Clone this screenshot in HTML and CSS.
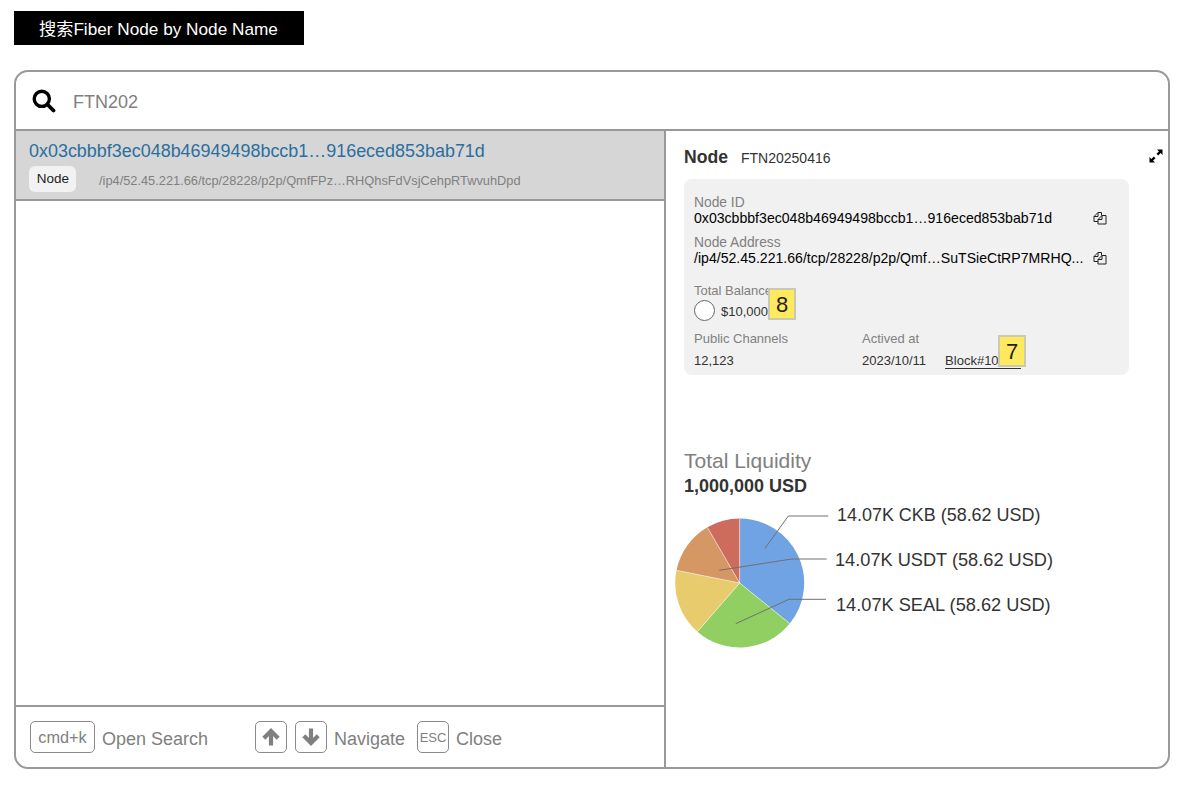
FILE: index.html
```html
<!DOCTYPE html>
<html lang="zh">
<head>
	<meta charset="UTF-8">
	<title>搜索Fiber Node</title>
	<link rel="stylesheet" href="styles.css">
</head>
<body>
	<div class="title">搜索Fiber Node by Node Name</div>
	<div class="panel">
		<div class="search">
			<svg class="search-icon" width="24" height="24" viewBox="0 0 24 24"><circle cx="9.800" cy="9.800" r="7.600" fill="none" stroke="#000" stroke-width="3.400"/><path d="M15.500 15.500L21.500 21.500" stroke="#000" stroke-width="3.800" stroke-linecap="round"/></svg>
			<span class="search-text">FTN202</span>
		</div>
		<div class="body">
			<div class="left">
				<div class="result">
					<div class="result-id">0x03cbbbf3ec048b46949498bccb1…916eced853bab71d</div>
					<div class="result-sub">
						<span class="tag">Node</span>
						<span class="result-addr">/ip4/52.45.221.66/tcp/28228/p2p/QmfFPz…RHQhsFdVsjCehpRTwvuhDpd</span>
					</div>
				</div>
				<div class="list-space"></div>
				<div class="footer">
					<span class="key key-cmd">cmd+k</span>
					<span class="hint hint-open">Open Search</span>
					<span class="key key-sq"><svg width="22" height="22" viewBox="0 0 22 22"><path d="M11 19.500V5.500M3.800 12.200L11 5L18.200 12.200" fill="none" stroke="#808080" stroke-width="4.200"/></svg></span>
					<span class="key key-sq key-down"><svg width="22" height="22" viewBox="0 0 22 22"><path d="M11 2.500V16.500M3.800 9.800L11 17L18.200 9.800" fill="none" stroke="#808080" stroke-width="4.200"/></svg></span>
					<span class="hint hint-nav">Navigate</span>
					<span class="key key-sq key-esc">ESC</span>
					<span class="hint hint-close">Close</span>
				</div>
			</div>
			<div class="right">
				<div class="node-head">
					<b class="node-title">Node</b>
					<span class="node-name">FTN20250416</span>
					<svg class="expand" width="14" height="14" viewBox="0 0 14 14"><path d="M8 0.500H13.500V6L11.600 4.100L9.200 6.500L7.500 4.800L9.900 2.400ZM6 13.500H0.500V8L2.400 9.900L4.800 7.500L6.500 9.200L4.100 11.600Z" fill="#000"/></svg>
				</div>
				<div class="card">
					<div class="label label-wide">Node ID</div>
					<div class="copy-row">
						<span class="value">0x03cbbbf3ec048b46949498bccb1…916eced853bab71d</span>
						<svg class="copy" width="14" height="14" viewBox="0 0 14 14"><path d="M5 10.500H1V5.500L5 1.500H8.500V4.500M1 5.500H5V1.500M5 8.500L9 4.500H13V13H5ZM5 8.500H9V4.500" fill="none" stroke="#222" stroke-width="1"/></svg>
					</div>
					<div class="label label-wide label-addr">Node Address</div>
					<div class="copy-row">
						<span class="value">/ip4/52.45.221.66/tcp/28228/p2p/Qmf…SuTSieCtRP7MRHQ...</span>
						<svg class="copy" width="14" height="14" viewBox="0 0 14 14"><path d="M5 10.500H1V5.500L5 1.500H8.500V4.500M1 5.500H5V1.500M5 8.500L9 4.500H13V13H5ZM5 8.500H9V4.500" fill="none" stroke="#222" stroke-width="1"/></svg>
					</div>
					<div class="balance">
						<div class="label">Total Balance</div>
						<div class="balance-row">
							<span class="coin"></span>
							<span class="value-sm">$10,000,</span>
						</div>
						<span class="badge badge-8">8</span>
					</div>
					<div class="stats">
						<div class="stat-channels">
							<div class="label">Public Channels</div>
							<div class="value-sm stat-value">12,123</div>
						</div>
						<div class="stat-active">
							<div class="label">Actived at</div>
							<div class="value-sm stat-value">2023/10/11<span class="block">Block#10</span></div>
							<span class="badge badge-7">7</span>
						</div>
					</div>
				</div>
				<div class="liquidity">
					<div class="liq-title">Total Liquidity</div>
					<div class="liq-amount">1,000,000 USD</div>
					<svg class="pie" width="390" height="150" viewBox="0 0 390 150">
						<g transform="translate(0.700 0)">
							<path d="M65 79L65 14.500A64.500 64.500 0 0 1 115.100 119.600Z" fill="#6fa3e3"/>
							<path d="M65 79L115.100 119.600A64.500 64.500 0 0 1 22.700 127.700Z" fill="#92cf62"/>
							<path d="M65 79L22.700 127.700A64.500 64.500 0 0 1 1.800 66.300Z" fill="#e7cb6c"/>
							<path d="M65 79L1.800 66.300A64.500 64.500 0 0 1 32.600 23.300Z" fill="#d59864"/>
							<path d="M65 79L32.600 23.300A64.500 64.500 0 0 1 65 14.500Z" fill="#cd6c5c"/>
							<path d="M65 79V14.500M65 79L115.100 119.600M65 79L22.700 127.700M65 79L1.800 66.300M65 79L32.600 23.300" stroke="#fff" stroke-width="0.500" fill="none"/>
						</g>
						<path d="M91 44.300L114.300 12H154.300" class="leader"/>
						<path d="M45.300 66.300L117.700 55H152.700" class="leader"/>
						<path d="M61.700 119.700L115 95.300H152" class="leader"/>
						<text x="163" y="17" class="pie-ckb">14.07K CKB (58.62 USD)</text>
						<text x="161" y="62">14.07K USDT (58.62 USD)</text>
						<text x="162" y="107">14.07K SEAL (58.62 USD)</text>
					</svg>
				</div>
			</div>
		</div>
	</div>
</body>
</html>
```

FILE: styles.css
```css
*{box-sizing:border-box;}
html,body{margin:0;padding:0;}
body{
	height:786px;
	padding:11px 28px 0 14px;
	background-color:#fff;
	font-family:"Liberation Sans","Noto Sans CJK SC",sans-serif;
	overflow:hidden;
}
.title{
	width:290px;
	height:34px;
	padding-left:25px;
	background-color:#000;
	color:#fff;
	font-size:17.200px;
	line-height:36px;
	white-space:nowrap;
}
.panel{
	display:flex;
	flex-direction:column;
	height:699px;
	margin-top:25px;
	border:2px solid #999;
	border-radius:14px;
}
.search{
	display:flex;
	align-items:center;
	flex:none;
	height:59px;
	padding-left:16px;
	border-bottom:2px solid #999;
}
.search-text{
	margin:3px 0 0 17px;
	color:#808080;
	font-size:18px;
}
.body{
	display:flex;
	flex:1;
	min-height:0;
}
.left{
	display:flex;
	flex-direction:column;
	flex:none;
	width:650px;
	border-right:2px solid #999;
}
.result{
	flex:none;
	height:70px;
	padding:9px 13px 0;
	background-color:#d6d6d6;
	border-bottom:2px solid #999;
}
.result-id{
	color:#2b6f9f;
	font-size:17.960px;
	line-height:22px;
}
.result-sub{
	display:flex;
	align-items:center;
	margin-top:4px;
}
.tag{
	width:47px;
	height:26px;
	padding-left:1px;
	border-radius:6px;
	background-color:#f2f2f2;
	color:#222;
	font-size:13.500px;
	line-height:26px;
	text-align:center;
}
.result-addr{
	margin:3px 0 0 23px;
	color:#808080;
	font-size:12.800px;
}
.list-space{flex:1;}
.footer{
	display:flex;
	align-items:center;
	flex:none;
	height:62px;
	border-top:2px solid #999;
	padding-left:14px;
}
.key{
	display:flex;
	align-items:center;
	justify-content:center;
	height:32px;
	border:1.500px solid #8a8a8a;
	border-radius:5px;
	color:#808080;
	font-size:16.300px;
}
.key-cmd{width:65px;}
.key-sq{width:32px;}
.key-down{margin-left:8px;}
.key-esc{
	margin-left:12px;
	font-size:13px;
}
.hint{
	margin-top:4px;
	color:#808080;
	font-size:18px;
}
.hint-open{
	width:153px;
	margin-left:7px;
}
.hint-nav{margin-left:7px;}
.hint-close{margin-left:7px;}
.right{
	flex:1;
	padding:0 0 0 18px;
}
.node-head{
	position:relative;
	display:flex;
	align-items:baseline;
	height:48px;
	padding-top:16px;
}
.node-title{
	color:#333;
	font-size:17.600px;
}
.node-name{
	margin-left:13px;
	color:#333;
	font-size:14px;
}
.expand{
	position:absolute;
	top:18px;
	right:5px;
}
.card{
	width:445px;
	height:196px;
	padding:16px 10px 0;
	border-radius:8px;
	background-color:#f1f1f1;
}
.label{
	color:#808080;
	font-size:13px;
	line-height:15px;
}
.label-wide{font-size:13.800px;}
.label-addr{margin-top:9px;}
.copy-row{
	display:flex;
	justify-content:space-between;
	align-items:center;
	width:413px;
	height:16px;
}
.value{
	color:#000;
	font-size:14.100px;
	white-space:nowrap;
}
.balance{
	position:relative;
	margin-top:17px;
}
.balance-row{
	display:flex;
	align-items:center;
	margin-top:2px;
}
.coin{
	width:21px;
	height:21px;
	border:1px solid #666;
	border-radius:50%;
	background-color:#fff;
}
.value-sm{
	color:#333;
	font-size:13px;
}
.balance-row .value-sm{margin:2px 0 0 6px;}
.badge{
	position:absolute;
	width:28px;
	height:32px;
	border:2px solid #c9c9b4;
	background-color:#ffe95c;
	color:#222;
	font-size:22px;
	line-height:29px;
	text-align:center;
}
.badge-8{
	left:74px;
	top:5px;
}
.badge-7{
	left:136px;
	top:4px;
}
.stats{
	display:flex;
	margin-top:10px;
}
.stat-channels{width:168px;}
.stat-active{position:relative;}
.stat-value{margin-top:7px;}
/* the rest of the block number sits under the badge, only its underline shows */
.block{
	display:inline-block;
	width:76px;
	margin-left:19px;
	border-bottom:1px solid #333;
	line-height:14px;
}
.liquidity{margin-top:74px;}
.liq-title{
	color:#808080;
	font-size:21px;
	line-height:24px;
}
.liq-amount{
	margin-top:3px;
	color:#333;
	font-size:18px;
	font-weight:bold;
	line-height:20px;
}
.pie{
	display:block;
	margin:8px 0 0 -10px;
}
.pie text{
	fill:#333;
	font-size:18.200px;
}
.pie .pie-ckb{font-size:17.950px;}
.leader{
	fill:none;
	stroke:#707070;
	stroke-width:1;
}
```
